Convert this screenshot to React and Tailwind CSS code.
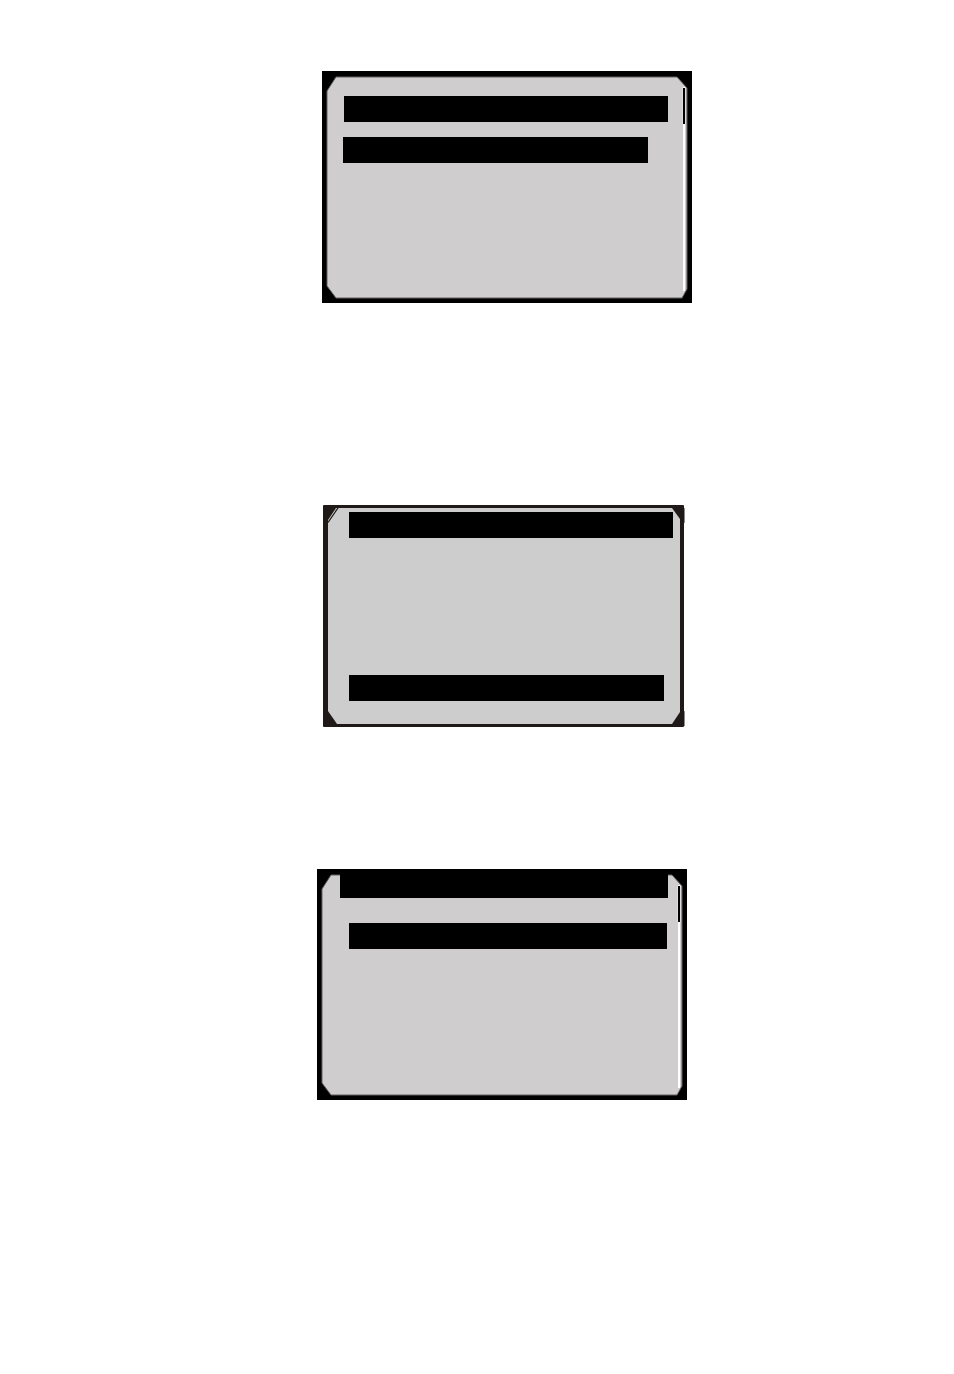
const DarkBezel = ({ height }) => (
  <svg
    aria-hidden="true"
    viewBox={`0 0 370 ${height}`}
    preserveAspectRatio="none"
    className="absolute inset-0 h-full w-full"
  >
    <rect width="370" height={height} fill="#000" />
    <polygon
      points={`5,20 14,6 355,6 365,17 365,${height - 14} 360,${height - 5} 14,${height - 5} 5,${height - 17}`}
      fill="#cfcdce"
      stroke="#62605f"
      strokeWidth="1"
    />
    {/* Scroll track and thumb */}
    <rect x="361" y="16" width="2" height={height - 28} fill="#fff" />
    <rect x="360" y="17" width="5" height="36" fill="#dddbdc" />
    <rect x="361" y="17" width="2" height="36" fill="#000" />
    <rect x="364" y="17" width="1" height={height - 31} fill="#8d8b8b" />
  </svg>
);

const LightBezel = () => (
  <svg
    aria-hidden="true"
    viewBox="0 0 362 222"
    preserveAspectRatio="none"
    className="absolute inset-0 h-full w-full"
  >
    <rect width="361" height="222" rx="1" fill="#1f1a17" />
    <rect x="361" y="3" width="1" height="15" fill="#8c8988" />
    <rect x="361" y="206" width="1" height="15" fill="#8c8988" />
    <polygon
      points="5,15 13,3 349,3 357,14 357,207 349,219 14,219 5,206"
      fill="#cdcdcd"
    />
    <path d="M5 17.5 L15 3" stroke="#1f1a17" strokeWidth="1.3" />
  </svg>
);

const Bar = ({ className }) => <div className={`relative bg-black ${className}`} />;

const App = () => {
  return (
    <main className="flex min-h-screen flex-col items-center bg-white pt-[71px] pb-16 pl-[50px] font-['Liberation_Sans',sans-serif]">
      <section className="relative ml-[10px] h-[232px] w-[370px] max-w-full pt-[25px]">
        <DarkBezel height={232} />
        <Bar className="ml-[22px] h-[26px] w-[324px]" />
        <Bar className="mt-[15px] ml-[21px] h-[26px] w-[305px]" />
      </section>

      <section className="relative mt-[202px] ml-1 h-[222px] w-[362px] max-w-full pt-[7px]">
        <LightBezel />
        <Bar className="ml-[26px] h-[26px] w-[324px]" />
        <Bar className="mt-[137px] ml-[26px] h-[26px] w-[315px]" />
      </section>

      <section className="relative mt-[142px] h-[231px] w-[370px] max-w-full">
        <DarkBezel height={231} />
        <Bar className="ml-[23px] h-[29px] w-[328px]" />
        <Bar className="mt-[25px] ml-[32px] h-[26px] w-[318px]" />
      </section>
    </main>
  );
};

export default App;
